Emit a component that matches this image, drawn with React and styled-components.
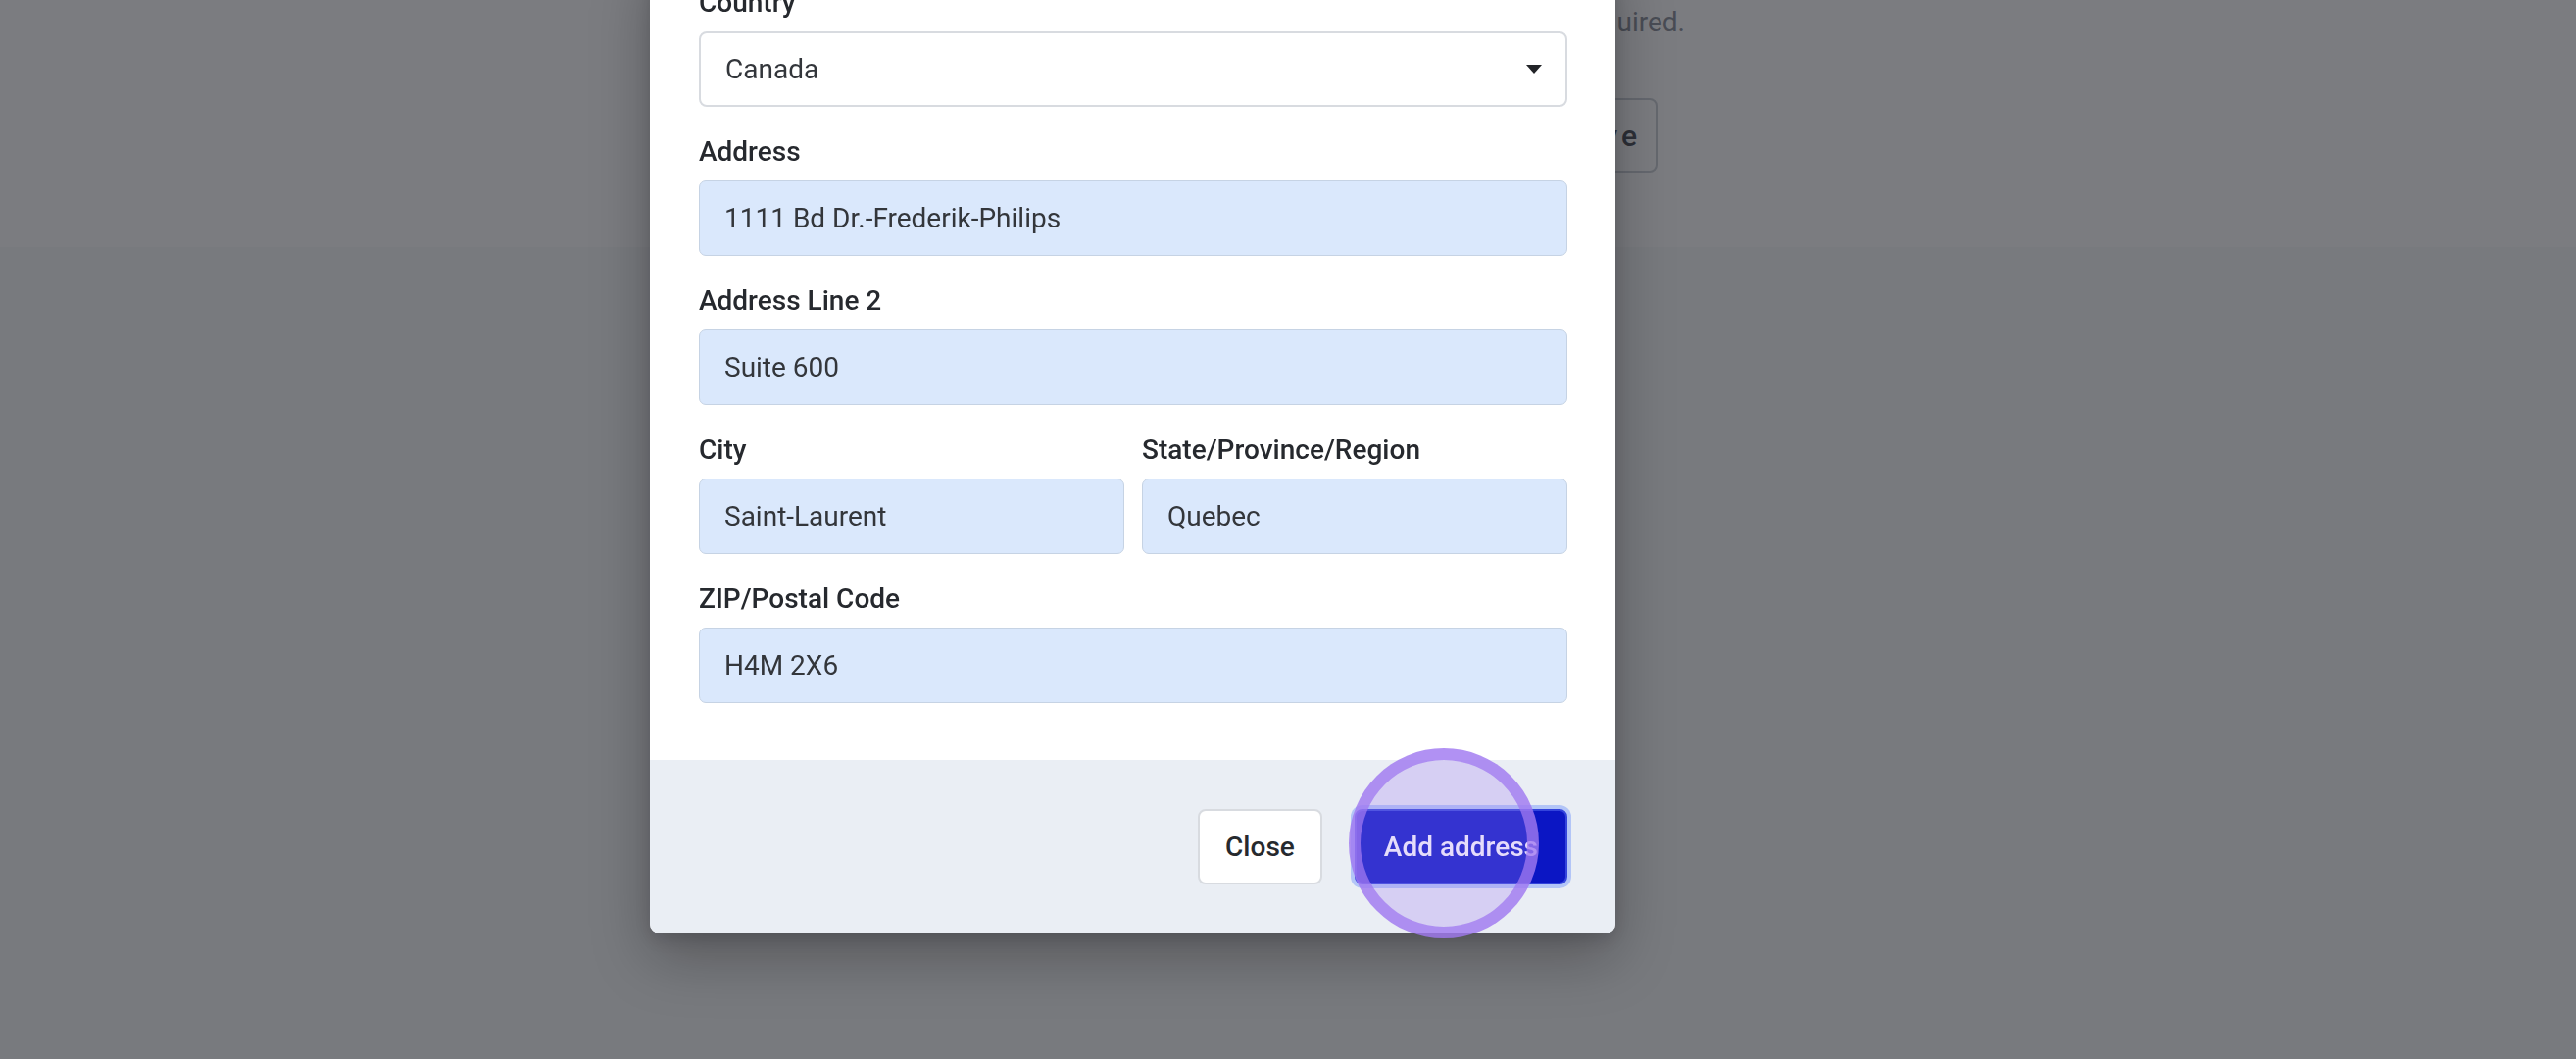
import React from 'react';
import styled, { createGlobalStyle } from 'styled-components';

const GlobalStyle = createGlobalStyle`
  html, body {
    margin: 0;
    padding: 0;
  }
  body {
    font-family: Roboto, "Liberation Sans", Arial, sans-serif;
    background: #f9fafb;
    overflow: hidden;
  }
  * {
    box-sizing: border-box;
  }
`;

// page behind the dialog
const Page = styled.div`
  height: 1080px;
  background: #f9fafb;
`;

const PageHeader = styled.header`
  height: 252px;
  background: #ffffff;
`;

const HeaderInner = styled.div`
  width: 1719px;
  display: flex;
  flex-direction: column;
  align-items: flex-end;
  padding-top: 3px;
`;

const Note = styled.p`
  margin: 0;
  font-size: 28px;
  line-height: 40px;
  color: #959aa3;
`;

const HeaderActions = styled.div`
  display: flex;
  gap: 24px;
  margin-top: 57px;
  margin-right: 28px;
`;

const GhostButton = styled.button`
  height: 76px;
  padding: 0 15px 0 18px;
  border: 2px solid #d1d5db;
  border-radius: 8px;
  background: #ffffff;
  font-family: inherit;
  font-size: 30px;
  font-weight: 500;
  letter-spacing: 4px;
  color: #5a5e66;
`;

// dialog
const Overlay = styled.div`
  position: fixed;
  inset: 0;
  background: rgba(5, 7, 15, 0.53);
  padding-left: 663px;
`;

const Modal = styled.div`
  width: 985px;
  margin-top: -47px;
  background: #ffffff;
  border-radius: 10px;
  box-shadow: 0 24px 60px rgba(0, 0, 0, 0.28), 0 6px 16px rgba(0, 0, 0, 0.12);
`;

const Body = styled.div`
  padding: 32px 49px 58px 50px;
  display: flex;
  flex-direction: column;
  gap: 28px;
`;

const Row = styled.div`
  display: grid;
  grid-template-columns: 1fr 1fr;
  gap: 18px;
`;

const Field = styled.label`
  display: flex;
  flex-direction: column;
  gap: 11px;
`;

const Label = styled.span`
  font-size: 28px;
  line-height: 36px;
  font-weight: 500;
  color: #26292e;
`;

const Input = styled.input`
  width: 100%;
  height: 77px;
  padding: 0 25px;
  border: 1.5px solid #c6d3e4;
  border-radius: 7px;
  background: #dae8fc;
  font-family: inherit;
  font-size: 28px;
  color: #33363b;
  outline: none;
`;

const SelectWrap = styled.div`
  position: relative;
`;

const Select = styled.select`
  width: 100%;
  height: 77px;
  padding: 0 25px;
  appearance: none;
  border: 2px solid #d8dbe0;
  border-radius: 8px;
  background: #ffffff;
  font-family: inherit;
  font-size: 28px;
  color: #33363b;
  outline: none;
`;

const Caret = styled.svg`
  position: absolute;
  right: 26px;
  top: 34px;
  pointer-events: none;
`;

const Footer = styled.div`
  display: flex;
  justify-content: flex-end;
  align-items: center;
  gap: 33px;
  padding: 50px 49px;
  background: #eaeef4;
  border-radius: 0 0 10px 10px;
`;

const Button = styled.button`
  position: relative;
  height: 77px;
  padding: 0 ${p => (p.$primary ? '28px' : '26px')};
  border-radius: 8px;
  border: ${p => (p.$primary ? '2px solid #3344dc' : '2px solid #d8dbe0')};
  background: ${p => (p.$primary ? '#0b16c4' : '#ffffff')};
  color: ${p => (p.$primary ? '#ffffff' : '#26292e')};
  box-shadow: ${p => (p.$primary ? '0 0 0 4px #b3c5f7' : 'none')};
  font-family: inherit;
  font-size: 28px;
  font-weight: 500;
`;

// click highlight drawn over the primary button
const ClickRing = styled.span`
  position: absolute;
  left: -8px;
  top: -64px;
  width: 194px;
  height: 194px;
  border-radius: 50%;
  border: 12px solid rgba(160, 120, 240, 0.75);
  background: rgba(160, 130, 240, 0.28);
  pointer-events: none;
`;

const fields = {
  address: '1111 Bd Dr.-Frederik-Philips',
  address2: 'Suite 600',
  city: 'Saint-Laurent',
  region: 'Quebec',
  zip: 'H4M 2X6'
};

export default function App() {
  return (
    <>
      <GlobalStyle />
      <Page>
        <PageHeader>
          <HeaderInner>
            <Note>Fields marked with an asterisk (*) are required.</Note>
            <HeaderActions>
              <GhostButton>Add address</GhostButton>
              <GhostButton>Save</GhostButton>
            </HeaderActions>
          </HeaderInner>
        </PageHeader>
      </Page>

      <Overlay>
        <Modal>
          <Body>
            <Field>
              <Label>Country</Label>
              <SelectWrap>
                <Select defaultValue="CA">
                  <option value="CA">Canada</option>
                  <option value="US">United States</option>
                </Select>
                <Caret width="16" height="9" viewBox="0 0 16 9">
                  <path d="M0 0 H16 L8 9 Z" fill="#222428" />
                </Caret>
              </SelectWrap>
            </Field>

            <Field>
              <Label>Address</Label>
              <Input defaultValue={fields.address} />
            </Field>

            <Field>
              <Label>Address Line 2</Label>
              <Input defaultValue={fields.address2} />
            </Field>

            <Row>
              <Field>
                <Label>City</Label>
                <Input defaultValue={fields.city} />
              </Field>
              <Field>
                <Label>State/Province/Region</Label>
                <Input defaultValue={fields.region} />
              </Field>
            </Row>

            <Field>
              <Label>ZIP/Postal Code</Label>
              <Input defaultValue={fields.zip} />
            </Field>
          </Body>

          <Footer>
            <Button>Close</Button>
            <Button $primary>
              Add address
              <ClickRing />
            </Button>
          </Footer>
        </Modal>
      </Overlay>
    </>
  );
}
